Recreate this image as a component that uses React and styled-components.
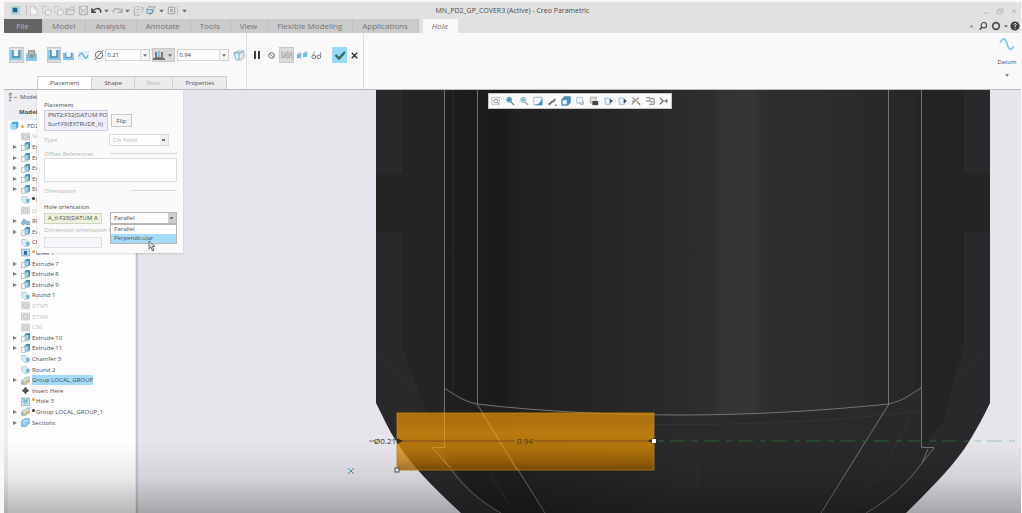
import React from 'react'
import styled, { createGlobalStyle, css } from 'styled-components'

const colors = {
  chrome: '#e1e1e1',
  tab: '#cbcbcc',
  ribbon: '#f9f9f9',
  line: '#b9b9bb',
  text: '#4c4c4c',
  muted: '#b4b4b4',
  canvas: '#e6e5ec',
}

const holeShape = (
  <>
    <path d="M0 1h12v10H0z" fill="#84c8e8" />
    <path d="M3 0h6v8H3z" fill="#f2f6f8" />
    <path d="M3 1v7h6V1" fill="none" stroke="#4f7f96" strokeWidth="1.4" />
  </>
)

const glyphs = {
  app: (
    <>
      <path d="M1 1h10v10H1z" fill="#b8d3df" />
      <path d="M3 3h5v5H3z" fill="#1c658b" />
    </>
  ),
  page: <path d="M2.500 1.500h4.500l3 3v6.500h-7.500zM7 1.500v3h3" fill="#f4f4f4" stroke="#c6c6c6" />,
  copyPage: (
    <path d="M2 1.500h4l3 2.500M2 1.500v7h3M5 5.500h6v4l-2 1.500H5z" fill="#efefef" stroke="#bebebe" />
  ),
  open: <path d="M1 10.500l2-5h8l-2 5zM1 10V4h3l1 1h4M6 2.500h4v2" fill="none" stroke="#b2b2b2" />,
  save: (
    <>
      <path d="M1.500 1.500h9v9h-9z" fill="#dadada" stroke="#a8a8a8" />
      <path d="M3.500 2v3h5V2M4 7.500h4v3H4z" fill="#f5f5f5" stroke="#adadad" />
    </>
  ),
  undo: <path d="M1 3.500V8h4.500M1.500 7.500C4 3 9 3 10.500 6v2.500" fill="none" stroke="#444" strokeWidth="1.6" />,
  redo: <path d="M11 3.500V8H6.500M10.500 7.500C8 3 3 3 1.500 6v2.500" fill="none" stroke="#aaa" strokeWidth="1.4" />,
  caret: <path d="M3 5h6L6 8.500z" fill="#6a6a6a" />,
  regen: <path d="M1.500 2v9h6M4 2h3M4 5h3M4 8h2M8 9l3-3M8 3h3v3" fill="none" stroke="#a8a8a8" />,
  windows: (
    <>
      <path d="M4 2h7l-2 3H2z" fill="#dfe9ee" stroke="#8a979d" />
      <path d="M2 5h6v4H2z" fill="#c4e2f0" stroke="#6f95a8" />
      <path d="M5 11l5-5" stroke="#777" />
    </>
  ),
  square: <path d="M2.500 2.500h7v7h-7zM5 5h2v2H5z" fill="none" stroke="#9d9d9d" />,
  hole: holeShape,
  drill: (
    <>
      <path d="M0 4h12v8H0z" fill="#84c8e8" />
      <path d="M2 0h8v5L8 9H4L2 5z" fill="#979797" />
      <path d="M3 1l6 4M9 1L3 5" stroke="#ddd" />
    </>
  ),
  holeSmall: (
    <>
      <path d="M0 3h12v8H0z" fill="#7fc6e8" />
      <path d="M3 3h6v5H3z" fill="#fff" />
      <path d="M3 3v5h6V3" fill="none" stroke="#4f7f96" />
    </>
  ),
  sketch: (
    <>
      <path d="M0 1h12v10H0z" fill="#dfecf3" />
      <path d="M1 7c2-5 4-4 5-1s3 4 5 0" fill="none" stroke="#5ba6c9" strokeWidth="1.3" />
    </>
  ),
  diameter: (
    <>
      <circle cx="6" cy="6" r="3.700" fill="none" stroke="#747474" />
      <path d="M1.500 11l9-10" stroke="#747474" />
    </>
  ),
  depth: (
    <>
      <path d="M0 9h12v2H0z" fill="#707070" />
      <path d="M2 3h2v5h4V3h2v6H2z" fill="#777" />
      <path d="M5 2h2v6H5z" fill="#7ac5e9" />
    </>
  ),
  box: (
    <>
      <path d="M1 4l4-2h6v6l-3 3H3z" fill="#e1edf2" stroke="#a4b3b9" />
      <path d="M6 4v7M1 4h7l3-2" stroke="#65a7c5" fill="none" />
    </>
  ),
  pause: <path d="M3 2h2v8H3zM7 2h2v8H7z" fill="#3c3c3c" />,
  none: (
    <>
      <circle cx="6" cy="6" r="3" fill="none" stroke="#858585" strokeWidth="1.2" />
      <path d="M4 4l4 4" stroke="#858585" />
    </>
  ),
  mesh: <path d="M1 2v8M4 3l-2 6M3 9l4-7M6 4v6M8 3v6l3-6v7" fill="none" stroke="#a6a6a6" />,
  attached: (
    <>
      <path d="M1 5h4v4H1zM7 4h4v4H7z" fill="#6bbde2" />
      <path d="M2 4h3v3M8 3h3v3" fill="none" stroke="#a8b5bb" />
    </>
  ),
  glasses: (
    <>
      <circle cx="3" cy="7.500" r="2" fill="none" stroke="#6a6a6a" />
      <circle cx="8.500" cy="7.500" r="2" fill="none" stroke="#6a6a6a" />
      <path d="M2 5l2-3M10.500 7V2.500" stroke="#888" />
    </>
  ),
  check: <path d="M1.500 6L5 9.500 11 3" fill="none" stroke="#2f6c63" strokeWidth="2.400" />,
  close: <path d="M3 3l6 6M9 3L3 9" stroke="#3c3c3c" strokeWidth="1.700" />,
  curve: (
    <>
      <path d="M0 1h12M0 4h12M0 8h12M0 11h12" stroke="#dfe5e8" strokeWidth=".6" strokeDasharray="1 2" />
      <path d="M1 4c2-4 4-3 5 1s3 6 5 2" fill="none" stroke="#7cc2dd" strokeWidth="1.200" />
    </>
  ),
  min: <path d="M3 8.500h6" stroke="#b5b5b5" />,
  restore: <path d="M2.500 5.500h5v4h-5zM4.500 5V3.500h5v4H8" fill="none" stroke="#b5b5b5" />,
  exit: <path d="M3.500 3.500l5 5M8.500 3.500l-5 5" stroke="#b5b5b5" />,
  up: <path d="M3 7l3-3 3 3z" fill="#8e8e8e" />,
  search: (
    <>
      <circle cx="7" cy="5" r="3.200" fill="none" stroke="#444" strokeWidth="1.300" />
      <path d="M4.500 7.500L2 10.500" stroke="#444" strokeWidth="1.600" />
    </>
  ),
  ring: <circle cx="6" cy="6" r="4" fill="#ddd" stroke="#4b4b4b" strokeWidth="2" />,
  help: (
    <>
      <circle cx="6" cy="6" r="5.500" fill="#3e3e3e" />
      <path d="M4.500 4.500c0-2 3.500-2 3 0L6 6v1.500M6 8.500v1" fill="none" stroke="#eee" strokeWidth="1.200" />
    </>
  ),
  tree: <path d="M2.500 1v10M1 1.500h3v2H1M2 6.500h3M1 10.500h3M7 6.500h4" fill="none" stroke="#858585" />,
  part: (
    <>
      <path d="M1 4l3-3h7v7l-3 3H1z" fill="#4da7d5" />
      <path d="M1 4h7v7H1z" fill="#9dd6f1" />
    </>
  ),
  extrude: (
    <>
      <path d="M4 3l3-3h5v8l-2 2H4z" fill="#4a93b7" />
      <path d="M4 3h6v6H4z" fill="#a3cee3" />
      <path d="M.5 4.500h5v7h-5z" fill="#f2f7f9" stroke="#a1b2ba" />
    </>
  ),
  round: (
    <>
      <path d="M1 2h6l4 4v4l-3 1H4L1 8z" fill="#d9ebf3" stroke="#adc4cf" />
      <path d="M6 6l5-1v4l-3 2z" fill="#6fb2d2" />
    </>
  ),
  rib: <path d="M0 9l4-7 3 3 5 1v4H7L4 8v3z" fill="#8cc0d8" stroke="#8fa5b0" />,
  datum: (
    <>
      <path d="M.5 1.500h11v9H.5z" fill="#e4e4e4" stroke="#c1c1c1" />
      <path d="M3 8V4h6v4z" fill="none" stroke="#b5b5b5" />
    </>
  ),
  shell: (
    <>
      <path d="M.5 1.500h11v9H.5z" fill="#bfdbe8" stroke="#89a6b3" />
      <path d="M4 4h4v5H4z" fill="#2c7398" />
    </>
  ),
  group: (
    <>
      <path d="M1 6l6-4 4-1v6l-4 4H1z" fill="#d8e5eb" stroke="#8ca4af" />
      <path d="M6 5h5v4H8v2H6z" fill="#d8b571" />
      <path d="M1 7h4v4H1z" fill="#a7bdc7" />
    </>
  ),
  insert: (
    <>
      <path d="M6 2v8M2 6h8" stroke="#333" strokeWidth="3" />
      <path d="M5 5h2v2H5z" fill="#5fae55" />
    </>
  ),
  holeTree: (
    <>
      <path d="M.5 1.500h11v10H.5z" fill="#c5e4f2" stroke="#7fa9bd" />
      <path d="M4 2v6h4V2M4 5h4" fill="none" stroke="#4d92b3" />
    </>
  ),
  sections: (
    <>
      <path d="M1 4l4-3h6v6l-4 4H1z" fill="#8ecdea" stroke="#4f9cc2" />
      <path d="M4 4h6M4 4v5" stroke="#d7f0fb" />
    </>
  ),
  refit: (
    <>
      <path d="M1 1.500h9v9H1z" fill="#ececef" stroke="#c3c3c8" />
      <circle cx="6" cy="6" r="2" fill="#fff" stroke="#898992" />
      <path d="M7.500 7.500L10 10" stroke="#898992" />
    </>
  ),
  zoomIn: (
    <>
      <circle cx="5" cy="4.500" r="3" fill="#7fc1e2" stroke="#4b8fb3" />
      <path d="M7 7l4 4" stroke="#777" strokeWidth="1.500" />
      <path d="M3.500 4.500h3M5 3v3" stroke="#205a7d" />
    </>
  ),
  zoomOut: (
    <>
      <circle cx="5" cy="4.500" r="3" fill="#c3e1ef" stroke="#78a9c0" />
      <path d="M7 7l4 4" stroke="#999" strokeWidth="1.500" />
      <path d="M3.500 4.500h3" stroke="#205a7d" />
    </>
  ),
  repaint: (
    <>
      <path d="M1 1.500h10v9H1z" fill="#fff" stroke="#8ab0c3" />
      <path d="M11 2v9H2c5-1 7-4 9-9z" fill="#3d91bb" />
    </>
  ),
  style: (
    <>
      <path d="M1 9c3 0 2-3 5-3l4-4v4L7 8c-2 0-2 3-5 3z" fill="#757575" />
      <path d="M10 10l2 1-2 1z" fill="#333" />
    </>
  ),
  cube: (
    <>
      <path d="M1 4l3-3h7v7l-3 3H1z" fill="#4495bd" stroke="#447590" />
      <path d="M2 5h5v5H2z" fill="#eaf5fa" />
    </>
  ),
  views: (
    <>
      <path d="M2 1.500h7v7H2zM4 8.500h5" fill="#eef5f8" stroke="#a8bbc4" />
      <path d="M6 10h4V6" fill="none" stroke="#6daaca" />
    </>
  ),
  layers: (
    <>
      <path d="M1.500 1.500h7v7h-7z" fill="#ddd" stroke="#a6a6a6" />
      <path d="M4 6h7v5H4z" fill="#454545" />
    </>
  ),
  section: (
    <>
      <path d="M2 2.500h5l2 1.500v6H3z" fill="#e8f4fa" stroke="#89b3c6" />
      <path d="M8 3l4 3-4 3z" fill="#3e5664" />
    </>
  ),
  filter: <path d="M1 10l8-8M2 2l3 3M7 6l4 5M1 6l3 1M8 9h3" fill="none" stroke="#8d8870" strokeWidth="1.300" />,
  annotate: <path d="M1 2h5v4H1M7 3h4v7H5M6 7h4" fill="none" stroke="#808080" strokeWidth="1.200" />,
  spin: <path d="M1 2l4 4-4 4M5 6h6M9 4v4" fill="none" stroke="#666" strokeWidth="1.400" />,
}

const Icon = ({ name, size = 12 }) => (
  <Svg viewBox="0 0 12 12" width={size} height={size} aria-hidden="true">
    {glyphs[name]}
  </Svg>
)

const quickAccess = [
  ['app', 23],
  ['page', 13],
  ['copyPage', 12],
  ['copyPage', 12],
  ['open', 13],
  ['save', 13],
  ['undo', 12],
  ['caret', 9],
  ['redo', 12],
  ['caret', 9],
  ['regen', 12],
  ['windows', 12],
  ['caret', 10],
  ['square', 12],
  ['caret', 12],
]

const menuTabs = ['Model', 'Analysis', 'Annotate', 'Tools', 'View', 'Flexible Modeling', 'Applications']

const viewTools = [
  'refit', 'zoomIn', 'zoomOut', 'repaint', 'style', 'cube', 'views',
  'layers', 'section', 'section', 'filter', 'annotate', 'spin',
]

const features = [
  { icon: 'datum', label: 'Sk 1', dim: true },
  { icon: 'extrude', label: 'Extrude 1', open: true },
  { icon: 'extrude', label: 'Extrude 2', open: true },
  { icon: 'extrude', label: 'Extrude 3', open: true },
  { icon: 'extrude', label: 'Extrude 4', open: true },
  { icon: 'extrude', label: 'Extrude 5', open: true },
  { icon: 'round', label: 'Chamfer 1', mark: 'dark' },
  { icon: 'datum', label: 'DTM4', dim: true },
  { icon: 'rib', label: 'Rib 1', open: true },
  { icon: 'extrude', label: 'Extrude 6', open: true },
  { icon: 'round', label: 'Chamfer 2' },
  { icon: 'shell', label: 'Shell 1', mark: 'gold' },
  { icon: 'extrude', label: 'Extrude 7', open: true },
  { icon: 'extrude', label: 'Extrude 8', open: true },
  { icon: 'extrude', label: 'Extrude 9', open: true },
  { icon: 'round', label: 'Round 1' },
  { icon: 'datum', label: 'DTM5', dim: true },
  { icon: 'datum', label: 'DTM6', dim: true },
  { icon: 'datum', label: 'CS0', dim: true },
  { icon: 'extrude', label: 'Extrude 10', open: true },
  { icon: 'extrude', label: 'Extrude 11', open: true },
  { icon: 'round', label: 'Chamfer 3' },
  { icon: 'round', label: 'Round 2' },
  { icon: 'group', label: 'Group LOCAL_GROUP', open: true, selected: true },
  { icon: 'insert', label: 'Insert Here' },
  { icon: 'holeTree', label: 'Hole 3', mark: 'gold' },
  { icon: 'group', label: 'Group LOCAL_GROUP_1', open: true, mark: 'dark' },
  { icon: 'sections', label: 'Sections', open: true },
]

const Header = () => (
  <TitleBar>
    <QuickAccess>
      {quickAccess.map(([name, width], i) => (
        <ToolButton key={i} w={width} aria-label={name} divided={i === 0 || i === 13}>
          <Icon name={name} size={name === 'caret' ? 9 : 11} />
        </ToolButton>
      ))}
    </QuickAccess>
    <Title>MN_PD2_GP_COVER3 (Active) - Creo Parametric</Title>
    <WindowButtons>
      <ToolButton w={14} aria-label="Minimize"><Icon name="min" size={10} /></ToolButton>
      <ToolButton w={14} aria-label="Restore"><Icon name="restore" size={10} /></ToolButton>
      <ToolButton w={14} aria-label="Close"><Icon name="exit" size={10} /></ToolButton>
    </WindowButtons>
  </TitleBar>
)

const MenuBar = () => (
  <Menu>
    <FileTab>File</FileTab>
    {menuTabs.map(label => (
      <MenuTab key={label}>{label}</MenuTab>
    ))}
    <HoleTab>Hole</HoleTab>
    <MenuExtras>
      <ToolButton w={12} aria-label="Collapse ribbon"><Icon name="up" size={9} /></ToolButton>
      <ToolButton w={12} aria-label="Search"><Icon name="search" size={10} /></ToolButton>
      <ToolButton w={13} aria-label="Resources"><Icon name="ring" size={10} /></ToolButton>
      <ToolButton w={7} aria-label="More"><Icon name="caret" size={8} /></ToolButton>
      <ToolButton w={12} aria-label="Help"><Icon name="help" size={10} /></ToolButton>
    </MenuExtras>
  </Menu>
)

const Dashboard = () => (
  <Ribbon>
    <HoleOptions>
      <Controls>
        <RibbonButton pressed aria-label="Simple hole"><Icon name="hole" /></RibbonButton>
        <RibbonButton aria-label="Standard hole"><Icon name="drill" size={11} /></RibbonButton>
        <Spacer w={8} />
        <RibbonButton pressed aria-label="Rectangle profile"><Icon name="hole" /></RibbonButton>
        <RibbonButton aria-label="Drill profile"><Icon name="holeSmall" size={11} /></RibbonButton>
        <RibbonButton aria-label="Sketched profile"><Icon name="sketch" size={11} /></RibbonButton>
        <Field>
          <Icon name="diameter" />
          <Value w={36} defaultValue="0.21" aria-label="Diameter" />
          <Drop aria-label="Recent diameters"><Icon name="caret" size={8} /></Drop>
        </Field>
        <DepthButton aria-label="Depth option">
          <Icon name="depth" />
          <Icon name="caret" size={8} />
        </DepthButton>
        <Field>
          <Value w={43} defaultValue="0.94" aria-label="Depth" />
          <Drop aria-label="Recent depths"><Icon name="caret" size={8} /></Drop>
        </Field>
        <Spacer w={2} />
        <RibbonButton aria-label="Lightweight"><Icon name="box" /></RibbonButton>
      </Controls>
      <PanelTabs>
        <PanelTab active>Placement</PanelTab>
        <PanelTab>Shape</PanelTab>
        <PanelTab disabled>Note</PanelTab>
        <PanelTab>Properties</PanelTab>
      </PanelTabs>
    </HoleOptions>
    <Actions>
      <RibbonButton aria-label="Pause"><Icon name="pause" /></RibbonButton>
      <RibbonButton aria-label="No preview"><Icon name="none" size={11} /></RibbonButton>
      <RibbonButton pressed aria-label="Unattached"><Icon name="mesh" /></RibbonButton>
      <RibbonButton aria-label="Attached"><Icon name="attached" /></RibbonButton>
      <RibbonButton aria-label="Verify"><Icon name="glasses" size={11} /></RibbonButton>
      <Spacer w={8} />
      <RibbonButton accept aria-label="Accept"><Icon name="check" /></RibbonButton>
      <RibbonButton aria-label="Cancel"><Icon name="close" size={11} /></RibbonButton>
    </Actions>
    <DatumButton>
      <Icon name="curve" size={16} />
      <span>Datum</span>
      <Icon name="caret" size={8} />
    </DatumButton>
  </Ribbon>
)

const ModelTree = () => (
  <TreePane>
    <TreeTitle><Icon name="tree" size={10} />Model Tree</TreeTitle>
    <TreeHeading>Model Tree</TreeHeading>
    <Tree>
      <RootRow><Icon name="part" size={9} /><Mark kind="gold" />PD2_GP_COVER3.PRT</RootRow>
      {features.map(({ icon, label, open, dim, mark, selected }) => (
        <TreeRow key={label} dim={dim}>
          <Arrow open={open} />
          <Icon name={icon} size={9} />
          <RowLabel selected={selected}>
            {mark && <Mark kind={mark} />}
            {label}
          </RowLabel>
        </TreeRow>
      ))}
    </Tree>
  </TreePane>
)

const PlacementPanel = () => (
  <Panel>
    <PanelLabel>Placement</PanelLabel>
    <PanelRow h={21} cols="64px 21px">
      <References>
        <li>PNT2:F32(DATUM POINT)</li>
        <li>Surf:F9(EXTRUDE_6)</li>
      </References>
      <FlipButton>Flip</FlipButton>
    </PanelRow>
    <Gap h={3} />
    <PanelRow h={12} cols="63px 60px">
      <PanelLabel as="label" htmlFor="type" dim>Type</PanelLabel>
      <Select id="type" disabled defaultValue="On Point"><option>On Point</option></Select>
    </PanelRow>
    <Gap h={3} />
    <Divider w={67}>Offset References</Divider>
    <OffsetBox />
    <Gap h={4} />
    <Divider w={46}>Orientation</Divider>
    <Gap h={8} />
    <PanelLabel as="label" htmlFor="axis">Hole orientation</PanelLabel>
    <PanelRow h={12} cols="58px 67px">
      <Collector id="axis" defaultValue="A_6:F28(DATUM AXIS)" />
      <Select aria-label="Hole orientation type" defaultValue="Parallel" focused>
        <option>Parallel</option>
        <option>Perpendicular</option>
      </Select>
      <Options role="listbox" aria-label="Orientation options">
        <Option role="option">Parallel</Option>
        <Option role="option" active>Perpendicular</Option>
      </Options>
    </PanelRow>
    <Gap h={2} />
    <PanelLabel as="label" htmlFor="dimension" dim short>Dimension orientation ref</PanelLabel>
    <Gap h={2} />
    <PanelRow h={11} cols="58px">
      <Collector id="dimension" disabled />
    </PanelRow>
    <Cursor viewBox="0 0 8 12" width="8" height="12" aria-hidden="true">
      <path d="M1 1v8l2-2 1.500 4 1.500-1-1.500-3.500H7z" fill="#ddd" stroke="#555" strokeWidth=".8" />
    </Cursor>
  </Panel>
)

const body = 'M376 90V403C383 417 389 430 396 441C411 465 433 487 461 513H906C932 487 955 465 970 440C977 428 984 416 990 403V90z'

const Model = () => (
  <Scene viewBox="138 90 883 423" preserveAspectRatio="xMidYMin slice" role="img" aria-label="Cover model with hole preview">
    <defs>
      <linearGradient id="bore" gradientUnits="userSpaceOnUse" x1="444" x2="921" y1="0" y2="0">
        <stop offset="0" stopColor="#1e1d1f" />
        <stop offset=".13" stopColor="#1a191b" />
        <stop offset=".14" stopColor="#1f1f20" />
        <stop offset=".22" stopColor="#222" />
        <stop offset=".38" stopColor="#272728" />
        <stop offset=".5" stopColor="#2b2a2c" />
        <stop offset=".57" stopColor="#2f2f2f" />
        <stop offset=".58" stopColor="#343434" />
        <stop offset=".65" stopColor="#353535" />
        <stop offset=".67" stopColor="#2e2e2e" />
        <stop offset=".87" stopColor="#2b2b2b" />
        <stop offset=".88" stopColor="#2a282b" />
        <stop offset="1" stopColor="#262627" />
      </linearGradient>
      <linearGradient id="floor" x1="0" x2="1" y1="0" y2="0">
        <stop offset="0" stopColor="#201f21" />
        <stop offset=".5" stopColor="#2a2a2a" />
        <stop offset="1" stopColor="#2a292b" />
      </linearGradient>
      <linearGradient id="pin" x1="0" x2="0" y1="0" y2="1">
        <stop offset="0" stopColor="#d78a05" />
        <stop offset=".15" stopColor="#d88804" />
        <stop offset=".35" stopColor="#e69408" />
        <stop offset=".65" stopColor="#d78903" />
        <stop offset=".85" stopColor="#bd7500" />
        <stop offset="1" stopColor="#955900" />
      </linearGradient>
    </defs>
    <path d={body} fill="#29292b" />
    <path d="M401 90h43v357l-20-37-23-63V232h-25v-59h25zM921 90h44v83h25v59h-25v115l-21 73-23 27z" fill="#242425" />
    <path d="M376 190h68M921 190h69M376 213h68M921 213h69" stroke="#222223" strokeWidth="1" />
    <path d="M444 90h477v298c-12 8-20 13-32 16C820 411 750 415 683 415S546 412 477 404c-14-4-22-10-33-16z" fill="url(#bore)" />
    <path d="M477 404c69 8 139 11 206 11s137-4 206-11l-68 109H545z" fill="url(#floor)" />
    <path d="M444 388c11 6 19 12 33 16l68 109h-44c-26-16-39-32-51-50l-6-15z" fill="#1f1e20" />
    <path d="M401 90v83M401 232v115l24 64M965 90v83M965 232v115l-21 73M376 350l36 38M985 353l-36 36M453 90v303M912 90v303" fill="none" stroke="#333335" strokeWidth=".7" />
    <path d="M560 422c120 5 250 3 360-11M698 460v40M911 414c-14 33-34 62-56 94M490 475l20 30" fill="none" stroke="#363638" strokeWidth=".8" />
    <g fill="none" stroke="#7d7d7d" strokeWidth=".9">
      <path d="M444.500 90v357.500H432M477.500 90v314M888.500 90v314M921.500 90v357.500H934" />
      <path d="M444 388c11 7 19 13 33 16 69 8 139 11 206 11s137-4 206-11c12-3 20-8 32-16" />
      <path d="M477 404l68 109M889 404l-68 109M432 448l18 20c13 18 29 33 51 45M438 448l10 17M934 448l-12 15c-14 20-32 36-56 50M928 449l-6 14" />
    </g>
    <path d="M658 441h311" stroke="#2a5231" strokeWidth="1.500" strokeDasharray="6 6 15 7" fill="none" />
    <path d="M975 441h46" stroke="#b3cfc8" strokeWidth="1.500" strokeDasharray="6 6 15 7" fill="none" />
    <rect x="397" y="413" width="257" height="57" fill="url(#pin)" opacity=".77" />
    <rect x="397" y="413" width="257" height="57" fill="none" stroke="#c98510" strokeWidth=".8" />
    <path d="M444.500 413v34.500H432l18 20M482 413l35 57" fill="none" stroke="#d09238" strokeWidth=".9" />
    <path d="M398 441h117M534 441h120" stroke="#7d4a26" />
    <path d="M369 441h6" stroke="#6d6d72" />
    <path d="M397 438l6 3-6 3zM654 438l-6 3 6 3z" fill="#3b2b16" />
    <DimensionText x="374" y="444">Ø0.21</DimensionText>
    <DimensionText x="517" y="444">0.94</DimensionText>
    <rect x="652" y="439" width="4" height="4" fill="#fff" />
    <rect x="395" y="468" width="4" height="4" fill="#f4f4f4" stroke="#555" />
    <path d="M348 468l6 6M354 468l-6 6" stroke="#4d97b3" />
  </Scene>
)

const App = () => (
  <Page>
    <GlobalStyle />
    <Header />
    <MenuBar />
    <Dashboard />
    <Workspace>
      <ModelTree />
      <Viewport>
        <Model />
        <ViewToolbar>
          {viewTools.map((name, i) => (
            <ToolButton key={i} w={14} aria-label={name}><Icon name={name} size={10} /></ToolButton>
          ))}
        </ViewToolbar>
      </Viewport>
      <PlacementPanel />
    </Workspace>
  </Page>
)

export default App

const GlobalStyle = createGlobalStyle`
  * {
    box-sizing: border-box;
  }
  body {
    margin: 0;
    background: #f8f8f8;
  }
  body, button, input, select {
    font-family: 'Open Sans', 'Noto Sans', sans-serif;
    font-size: 6px;
    color: ${colors.text};
  }
  button {
    padding: 0;
    border: 0;
    background: none;
  }
  ul {
    margin: 0;
    padding: 0;
    list-style: none;
  }
`

const Svg = styled.svg`
  display: block;
  flex: none;
`

const Page = styled.div`
  display: flex;
  flex-direction: column;
  min-height: 100vh;
  padding: 2px 1px 0 4px;
`

const TitleBar = styled.header`
  display: grid;
  grid-template-columns: 1fr auto 1fr;
  align-items: center;
  height: 17px;
  background: ${colors.chrome};
`

const QuickAccess = styled.div`
  display: flex;
  align-items: center;
`

const ToolButton = styled.button`
  display: flex;
  align-items: center;
  justify-content: center;
  width: ${props => props.w}px;
  height: 11px;
  border-right: ${props => (props.divided ? '1px solid #c4c4c4' : 0)};
`

const Title = styled.h1`
  margin: 0;
  font-size: 7px;
  font-weight: 400;
`

const WindowButtons = styled.div`
  display: flex;
  justify-content: flex-end;
`

const Menu = styled.nav`
  display: flex;
  height: 14px;
  background: ${colors.chrome};
`

const MenuTab = styled.button`
  padding: 0 10px 0 9px;
  border-right: 1px solid #c0c0c1;
  background: ${colors.tab};
  color: #747474;
  font-size: 8px;
  line-height: 12px;
  white-space: nowrap;
`

const FileTab = styled(MenuTab)`
  width: 39px;
  background: #646464;
  color: #b9b9b9;
`

const HoleTab = styled(MenuTab)`
  margin-left: 4px;
  border: 0;
  background: ${colors.ribbon};
  font-style: italic;
`

const MenuExtras = styled.div`
  display: flex;
  align-items: center;
  margin-left: auto;
`

const Ribbon = styled.section`
  display: flex;
  height: 57px;
  border-bottom: 1px solid ${colors.line};
  background: ${colors.ribbon};
`

const HoleOptions = styled.div`
  display: flex;
  flex-direction: column;
  justify-content: space-between;
  width: 243px;
  padding-top: 14px;
  border-right: 1px solid #dfdfe2;
`

const Controls = styled.div`
  display: flex;
  align-items: center;
  height: 16px;
  padding-left: 5px;
`

const RibbonButton = styled.button`
  display: flex;
  align-items: center;
  justify-content: center;
  width: 15px;
  height: 16px;
  ${props =>
    props.pressed &&
    css`
      border: 1px solid #c8c8c8;
      background: #dcdcdc;
    `}
  ${props =>
    props.accept &&
    css`
      background: #98d8f8;
    `}
`

const Spacer = styled.span`
  width: ${props => props.w}px;
`

const Field = styled.div`
  display: flex;
  align-items: center;
  height: 12px;
  margin-left: 2px;
`

const Value = styled.input`
  width: ${props => props.w}px;
  height: 12px;
  padding: 0 1px;
  border: 1px solid #d8d8d8;
  background: #fff;
`

const Drop = styled.button`
  display: grid;
  place-items: center;
  width: 9px;
  height: 12px;
  border: 1px solid #cecece;
  border-left: 0;
  background: #f6f6f6;
`

const DepthButton = styled.button`
  display: flex;
  align-items: center;
  gap: 1px;
  height: 14px;
  margin-left: 2px;
  border: 1px solid #c8c8c8;
  background: #d9d9d9;
`

const PanelTabs = styled.div`
  display: flex;
  height: 13px;
  padding-left: 33px;
`

const PanelTab = styled.button`
  padding: 0 12px;
  border: 1px solid #cdcdcd;
  border-bottom: 0;
  margin-right: -1px;
  background: ${props => (props.active ? '#fff' : '#ebebeb')};

  &:disabled {
    color: ${colors.muted};
  }
`

const Actions = styled.div`
  display: flex;
  width: 117px;
  padding: 14px 0 0 2px;
  border-right: 1px solid #dfdfe2;
`

const DatumButton = styled.button`
  display: flex;
  flex-direction: column;
  align-items: center;
  width: 28px;
  gap: 5px;
  padding-top: 4px;
  margin-left: auto;
`

const Workspace = styled.main`
  position: relative;
  display: flex;
  flex: 1;

  /* shade along the lower edge of the window */
  &::after {
    content: '';
    position: absolute;
    inset: auto 0 0;
    height: 72px;
    background: linear-gradient(transparent, rgba(0, 0, 0, 0.08) 50%, rgba(0, 0, 0, 0.28));
    pointer-events: none;
  }
`

const TreePane = styled.aside`
  flex: none;
  width: 134px;
  padding: 0 1px 0 4px;
  border-right: 2px solid #c6c6cc;
  background: #eeedf2;
`

const TreeTitle = styled.div`
  display: flex;
  align-items: center;
  gap: 2px;
  height: 14px;
`

const TreeHeading = styled.h2`
  height: 16px;
  margin: 0;
  padding-left: 11px;
  font-size: 6px;
  line-height: 16px;
`

const Tree = styled.ul`
  display: grid;
  grid-auto-rows: 11px 10px 11px 11px 10px;
  min-height: 393px;
  align-content: start;
  background: #fefefe;
  white-space: nowrap;
`

const TreeRow = styled.li`
  display: flex;
  align-items: center;
  gap: 2px;
  padding-left: 5px;
  color: ${props => (props.dim ? '#c2c2c2' : colors.text)};
`

const RootRow = styled(TreeRow)`
  padding-left: 2px;
`

const Arrow = styled.span`
  width: 6px;
  border: solid transparent;
  border-width: 2px 0 2px 4px;
  border-left-color: ${props => (props.open ? '#7d7d7d' : 'transparent')};
`

const RowLabel = styled.span`
  display: flex;
  line-height: 10px;
  background: ${props => (props.selected ? '#a5dbf6' : 'none')};
`

const Mark = styled.i`
  width: 3px;
  height: 3px;
  margin: 2px 1px 0 0;
  border-radius: 50%;
  background: ${props => (props.kind === 'gold' ? '#e0a63c' : '#333')};
`

const Viewport = styled.section`
  position: relative;
  flex: 1;
  min-width: 0;
  background: ${colors.canvas};
`

const Scene = styled.svg`
  display: block;
  width: 100%;
  height: 100%;
`

const DimensionText = styled.text`
  font-size: 8px;
  fill: #3d3222;
`

const ViewToolbar = styled.div`
  position: absolute;
  top: 3px;
  left: 350px;
  display: flex;
  align-items: center;
  height: 16px;
  border: 1px solid #c8c8c8;
  background: #fbfbfb;
`

const Panel = styled.form`
  position: absolute;
  top: 0;
  left: 33px;
  width: 146px;
  padding: 11px 6px 5px 7px;
  background: #fafafa;
  box-shadow: 0 1px 2px rgba(0, 0, 0, 0.15);
`

const PanelLabel = styled.div`
  display: block;
  width: ${props => (props.short ? '66px' : 'auto')};
  height: 9px;
  overflow: hidden;
  line-height: 9px;
  white-space: nowrap;
  color: ${props => (props.dim ? colors.muted : colors.text)};
`

const PanelRow = styled.div`
  position: relative;
  display: grid;
  grid-template-columns: ${props => props.cols};
  align-items: center;
  justify-content: start;
  column-gap: ${props => (props.h === 12 ? 8 : 3)}px;
  height: ${props => props.h}px;

  label + select:disabled {
    margin-left: -6px;
  }
`

const Gap = styled.div`
  height: ${props => props.h}px;
`

const References = styled.ul`
  height: 21px;
  padding: 0 3px;
  overflow: hidden;
  border: 1px solid #d0cddb;
  background: #f0eef8;
  line-height: 9px;
  white-space: nowrap;
`

const FlipButton = styled.button`
  height: 13px;
  border: 1px solid #c6c6c6;
  background: #f5f5f5;
`

const Select = styled.select`
  appearance: none;
  width: 100%;
  height: 12px;
  padding: 0 3px;
  border: 1px solid ${props => (props.focused ? '#b4b4b4' : '#dcdcdc')};
  border-radius: 0;
  background:
    linear-gradient(#777, #777) right 3px center / 3px 2px no-repeat,
    linear-gradient(${props => (props.focused ? '#cfcfcf, #cfcfcf' : '#f0f0f0, #f0f0f0')}) right / 8px 100% no-repeat,
    #fdfdfd;

  &:disabled {
    color: ${colors.muted};
    opacity: 1;
  }
`

const Divider = styled.div`
  display: flex;
  align-items: center;
  justify-content: space-between;
  height: 9px;
  color: ${colors.muted};
  white-space: nowrap;

  &::after {
    content: '';
    width: ${props => props.w}px;
    border-top: 1px solid #dadada;
  }
`

const OffsetBox = styled.div`
  height: 24px;
  border: 1px solid #dcdcdc;
  background: #fff;
`

const Collector = styled.input`
  width: 100%;
  height: 11px;
  padding: 0 3px;
  border: 1px solid #cfd2c6;
  background: #edf3dc;

  &:disabled {
    border-color: #dedce6;
    background: #f6f5fa;
  }
`

const Options = styled.ul`
  position: absolute;
  top: 12px;
  left: 66px;
  z-index: 1;
  width: 67px;
  border: 1px solid #b4b4b4;
  background: #fff;
`

const Option = styled.li`
  padding-left: 3px;
  line-height: 9px;
  background: ${props => (props.active ? '#a5dbf6' : '#fff')};
`

const Cursor = styled(Svg)`
  position: absolute;
  right: 27px;
  bottom: 1px;
  z-index: 2;
`
